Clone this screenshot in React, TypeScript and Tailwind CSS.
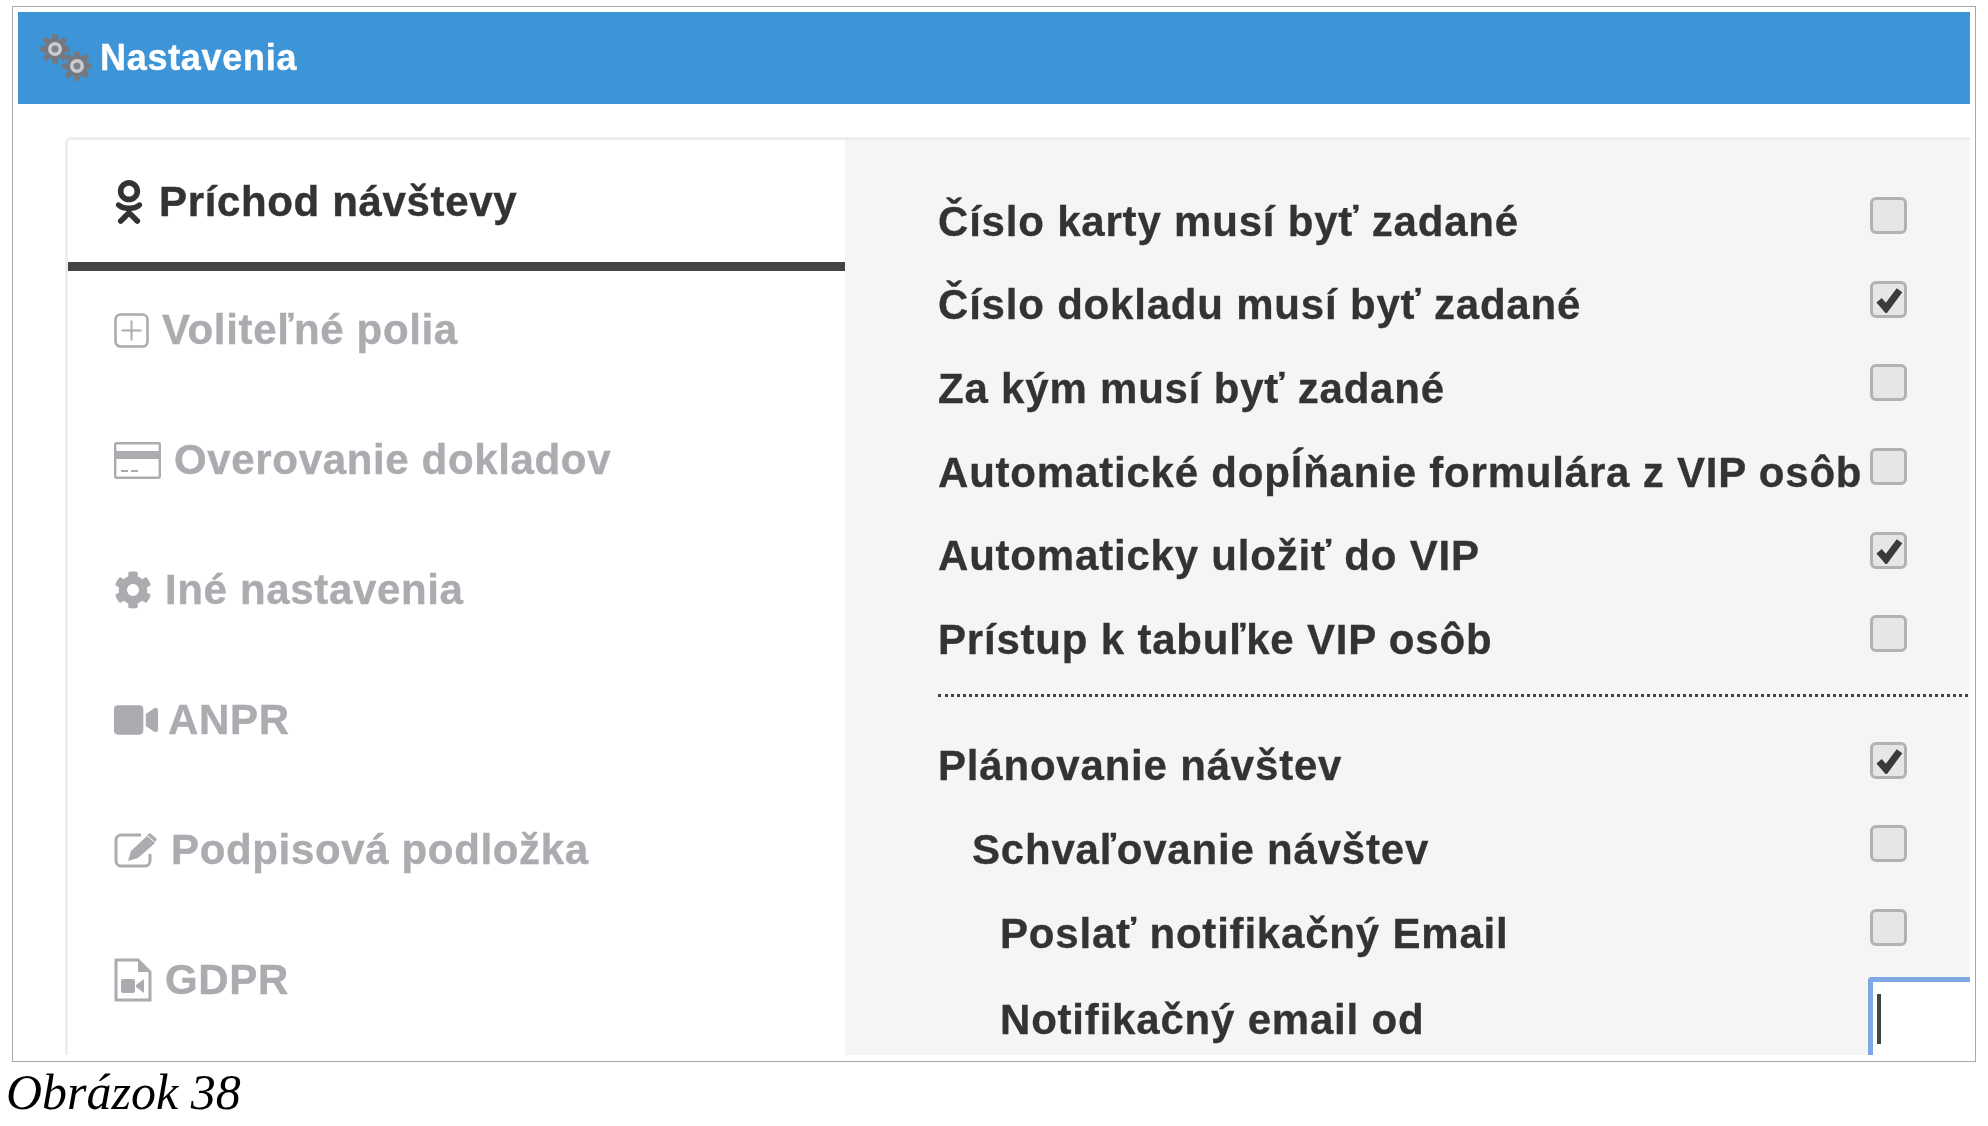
import type { ReactNode } from 'react';
import { FaCog, FaOdnoklassniki, FaVideo } from 'react-icons/fa';

function Gear({ className }: { className: string }) {
  const teeth = [0, 45, 90, 135, 180, 225, 270, 315];
  return (
    <svg viewBox="0 0 24 24" className={className}>
      {teeth.map((a) => (
        <rect key={a} x="9.7" y="0.2" width="4.6" height="5" rx="0.6" fill="#75797f" transform={`rotate(${a} 12 12)`} />
      ))}
      <circle cx="12" cy="12" r="8.6" fill="#75797f" />
      <circle cx="12" cy="12" r="5.6" fill="#c9ccd0" />
      <circle cx="12" cy="12" r="2.8" fill="#7f838a" />
    </svg>
  );
}

function PlusIcon() {
  return (
    <svg viewBox="0 0 35 35" className="h-[35px] w-[35px]">
      <rect x="1.5" y="1.5" width="32" height="32" rx="5" fill="none" stroke="currentColor" strokeWidth="2.6" />
      <path d="M17.5 7.5v20M7.5 17.5h20" stroke="currentColor" strokeWidth="2" />
    </svg>
  );
}

function CardIcon() {
  return (
    <svg viewBox="0 0 47 37" className="h-[37px] w-[47px]">
      <rect x="1.2" y="1.2" width="44.6" height="34.6" rx="1.5" fill="none" stroke="currentColor" strokeWidth="2.4" />
      <rect x="1" y="9" width="45" height="8" fill="currentColor" />
      <path d="M7 29h7M17 29h7" stroke="currentColor" strokeWidth="2" />
    </svg>
  );
}

function EditIcon() {
  return (
    <svg viewBox="0 0 44 36" className="h-[36px] w-[44px]">
      <path d="M27 3H7a5 5 0 0 0-5 5v21a5 5 0 0 0 5 5h24a5 5 0 0 0 5-5v-7" fill="none" stroke="currentColor" strokeWidth="3" />
      <path d="M33 4l8 7-17 15-10 3 3-10z" fill="currentColor" />
      <path d="M36 1l7 6-2 3-8-7z" fill="currentColor" />
    </svg>
  );
}

function FileVideoIcon() {
  return (
    <svg viewBox="0 0 38 44" className="h-[44px] w-[38px]">
      <path d="M2 2h22l12 12v28H2z" fill="none" stroke="currentColor" strokeWidth="3" />
      <path d="M24 2v12h12z" fill="currentColor" />
      <rect x="7" y="21" width="14" height="14" rx="2" fill="currentColor" />
      <path d="M22 27l8-6v14l-8-6z" fill="currentColor" />
    </svg>
  );
}

function Tab({ icon, label, gap }: { icon: ReactNode; label: string; gap: string }) {
  return (
    <div className={`flex h-[130px] items-start pt-[34px] pl-[46px] ${gap}`}>
      <span className="flex h-[50px] items-center text-[#aaacb0]">{icon}</span>
      <span className="text-[42px] leading-[50px] font-bold tracking-[0.65px] text-[#aaacb0] [-webkit-text-stroke:0.4px_#aaacb0]">{label}</span>
    </div>
  );
}

function Checkbox({ checked }: { checked?: boolean }) {
  return (
    <span className="mt-[-12px] flex h-[37px] w-[37px] items-center justify-center rounded-[6px] border-[3px] border-[#b2b2b2] bg-[#e6e6e6]">
      {checked && (
        <svg viewBox="0 0 24 24" className="h-[28px] w-[28px]">
          <path d="M3.5 13 9.5 20 21 4.5" fill="none" stroke="#3a3a3a" strokeWidth="6" />
        </svg>
      )}
    </span>
  );
}

function Row({ label, checked, indent = '' }: { label: string; checked?: boolean; indent?: string }) {
  return (
    <div className="flex h-[83.6px] items-center justify-between pr-[63px]">
      <span className={`text-[42px] leading-none font-bold tracking-[0.8px] whitespace-nowrap text-[#333333] [-webkit-text-stroke:0.3px_#333333] ${indent}`}>{label}</span>
      <Checkbox checked={checked} />
    </div>
  );
}

export default function App() {
  return (
    <div className="h-[1126px] overflow-hidden bg-white pt-[6px] font-['Liberation_Sans',sans-serif]">
      <div className="ml-[12px] h-[1056px] w-[1964px] border border-[#a9a9a9] p-[5px] blur-[0.7px]">
        <div className="flex h-[92px] items-center bg-[#3d95d7] pl-[22px]">
          <span className="relative h-[48px] w-[50px]">
            <Gear className="absolute top-0 left-0 h-[30px] w-[30px]" />
            <Gear className="absolute top-[17px] left-[22px] h-[30px] w-[30px]" />
          </span>
          <span className="ml-[10px] text-[36px] font-bold tracking-[0.7px] text-white [-webkit-text-stroke:0.4px_#ffffff]">Nastavenia</span>
        </div>

        <div className="h-[951px] overflow-hidden pt-[33px] pl-[47px]">
          <div className="flex h-[918px] rounded-tl-[6px] border-t-[3px] border-l-[3px] border-[#eeeeee]">
            <div className="w-[777px] shrink-0 bg-white">
              <div className="flex h-[131px] items-start gap-[15px] border-b-[9px] border-[#444444] pt-[37px] pl-[46px]">
                <span className="flex h-[50px] items-center">
                  <FaOdnoklassniki className="h-[44px] w-[30px] text-[#333333]" />
                </span>
                <span className="text-[42px] leading-[50px] font-bold tracking-[0.65px] text-[#333333] [-webkit-text-stroke:0.4px_#333333]">Príchod návštevy</span>
              </div>
              <Tab icon={<PlusIcon />} label="Voliteľné polia" gap="gap-[13px]" />
              <Tab icon={<CardIcon />} label="Overovanie dokladov" gap="gap-[13px]" />
              <Tab icon={<FaCog className="h-[38px] w-[38px]" />} label="Iné nastavenia" gap="gap-[13px]" />
              <Tab icon={<FaVideo className="h-[44px] w-[44px]" />} label="ANPR" gap="gap-[10px]" />
              <Tab icon={<EditIcon />} label="Podpisová podložka" gap="gap-[13px]" />
              <Tab icon={<FileVideoIcon />} label="GDPR" gap="gap-[13px]" />
            </div>

            <div className="min-w-0 flex-1 overflow-hidden bg-[#f5f5f5] pt-[40px] pl-[93px]">
              <Row label="Číslo karty musí byť zadané" />
              <Row label="Číslo dokladu musí byť zadané" checked />
              <Row label="Za kým musí byť zadané" />
              <Row label="Automatické dopĺňanie formulára z VIP osôb" />
              <Row label="Automaticky uložiť do VIP" checked />
              <Row label="Prístup k tabuľke VIP osôb" />
              <div className="mt-[12px] mr-[2px] mb-[28px] border-t-[3px] border-dotted border-[#444444]" />
              <Row label="Plánovanie návštev" checked />
              <Row label="Schvaľovanie návštev" indent="ml-[34px]" />
              <Row label="Poslať notifikačný Email" indent="ml-[62px]" />
              <div className="flex items-start justify-between">
                <span className="mt-[24px] ml-[62px] text-[42px] leading-none font-bold tracking-[0.8px] text-[#333333] [-webkit-text-stroke:0.3px_#333333]">Notifikačný email od</span>
                <div className="mt-[2px] flex h-[100px] w-[102px] rounded-tl-[4px] border-t-[5px] border-l-[5px] border-[#7fa8e6] bg-white pt-[12px] pl-[4px]">
                  <span className="h-[50px] w-[4px] bg-[#444444]" />
                </div>
              </div>
            </div>
          </div>
        </div>
      </div>
      <p className="pl-[6px] font-['Liberation_Serif',serif] text-[50px] leading-[60px] text-black italic">Obrázok 38</p>
    </div>
  );
}
